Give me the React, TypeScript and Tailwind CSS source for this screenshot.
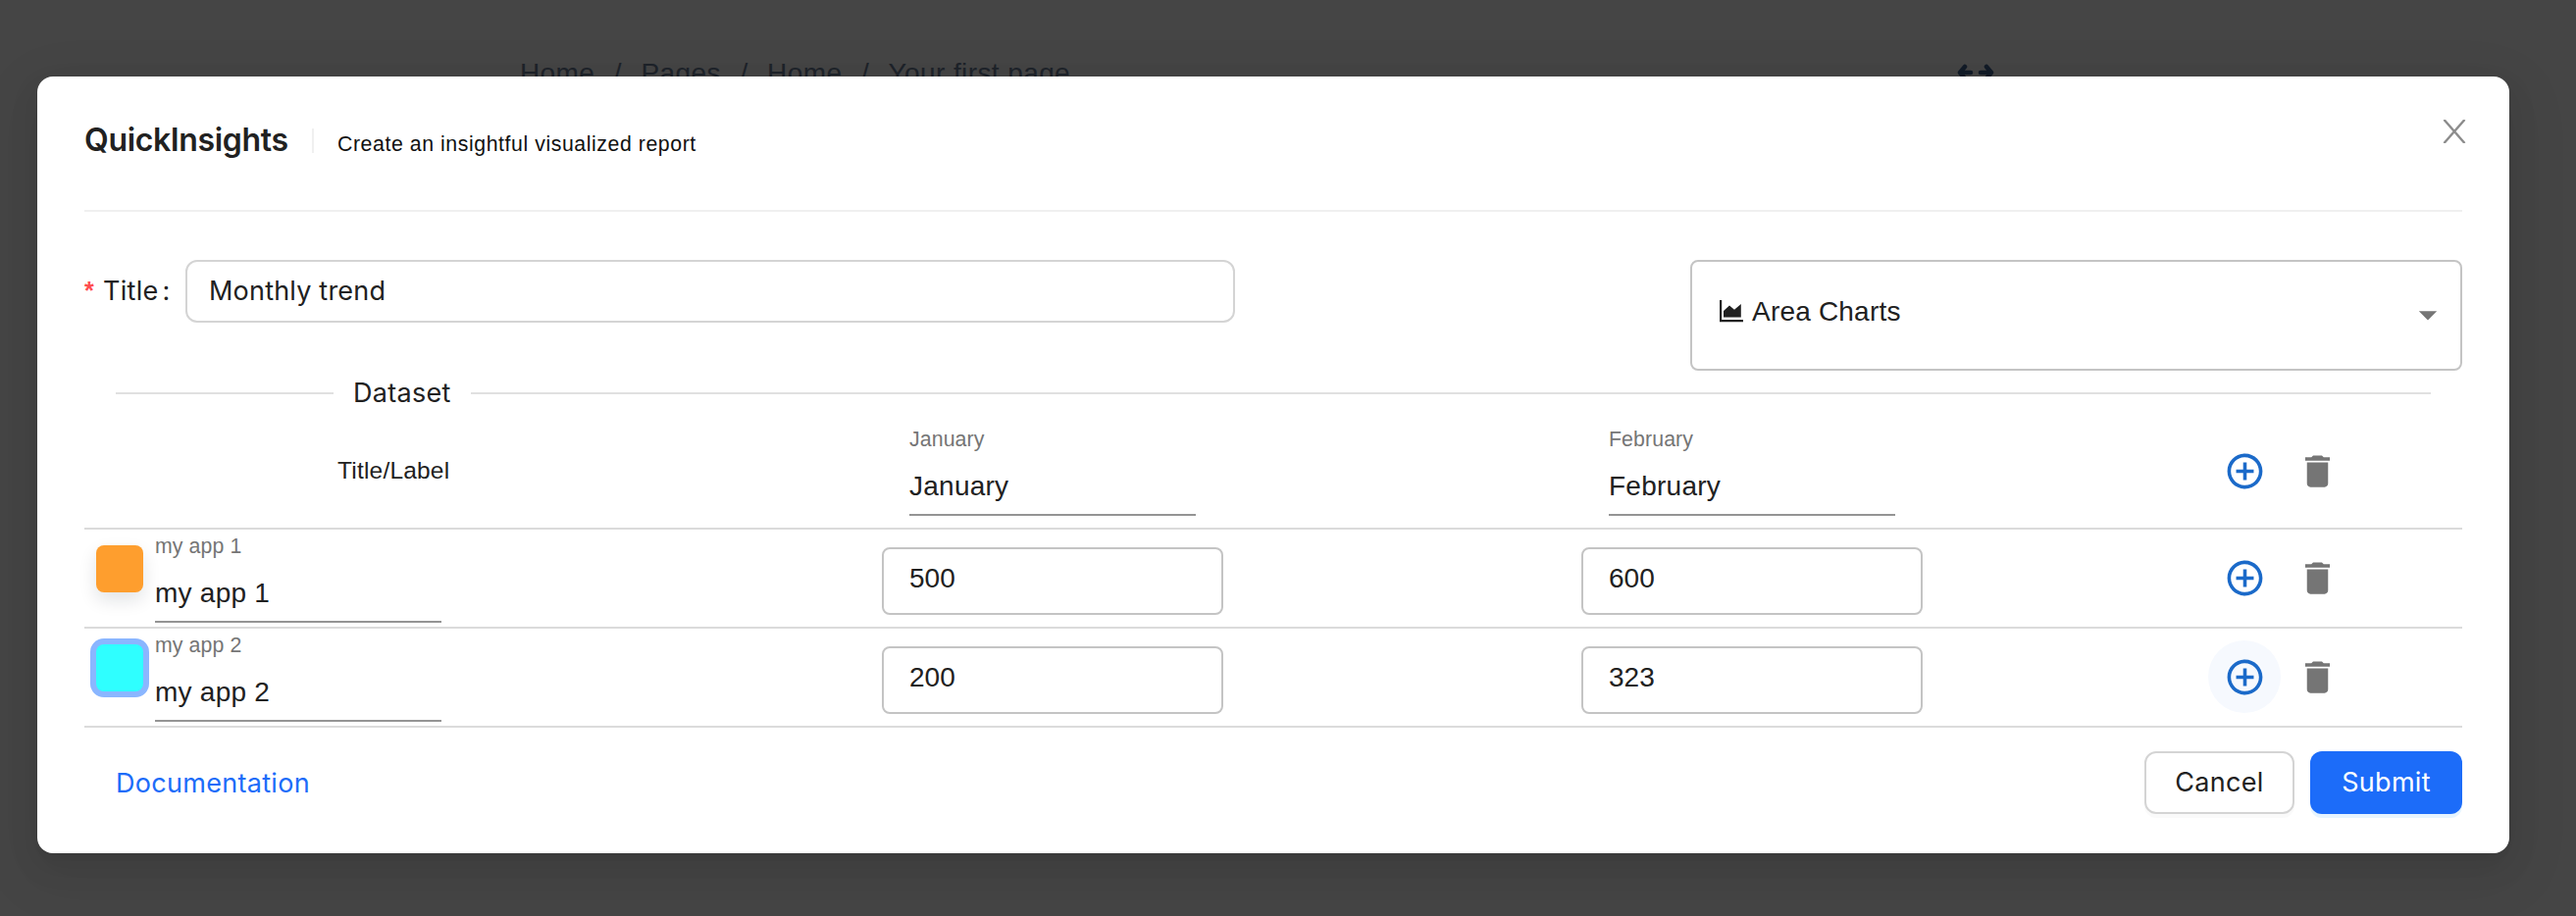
import { MdAddCircleOutline, MdDelete, MdArrowDropDown } from "react-icons/md";

const rows = [
  { label: "my app 1", values: ["500", "600"], swatch: "bg-[#fe9e2e] shadow-[0_8px_18px_rgba(15,23,42,0.12)]", hover: false },
  { label: "my app 2", values: ["200", "323"], swatch: "bg-[#2fffff] shadow-[0_0_0_6px_#8ab6ff]", hover: true },
];

function Actions({ hover = false }: { hover?: boolean }) {
  return (
    <div className="mb-[1px] flex items-center">
      <div className={hover ? "flex size-[74px] items-center justify-center rounded-full bg-[#f6f9fe]" : "flex size-[74px] items-center justify-center"}>
        <MdAddCircleOutline className="size-[43px] text-[#1b6ac9]" />
      </div>
      <div className="flex size-[74px] items-center justify-center">
        <MdDelete className="size-[43px] text-[#757575]" />
      </div>
    </div>
  );
}

function Field({ label }: { label: string }) {
  return (
    <div className="flex h-[92px] w-[292px] flex-col border-b-2 border-[#949494]">
      <span className="text-[21.3px] leading-[28px] tracking-[0.1px] text-[#757575]">{label}</span>
      <span className="mt-[14px] text-[28px] leading-[40px] tracking-[0.25px]">{label}</span>
    </div>
  );
}

export default function App() {
  return (
    <div className="h-[934px] w-[2626px] overflow-hidden bg-[#454545] font-['Liberation_Sans',sans-serif] text-[#212121]">
      <div className="flex h-[78px] pl-[530px] pt-[56px] text-[#1c2128]">
        <div className="flex h-[22px] w-[1464px] gap-[19.5px] overflow-hidden whitespace-pre text-[28px] leading-[37px] tracking-[0.4px]">
          <span>Home</span><span>/</span><span>Pages</span><span>/</span><span>Home</span><span>/</span><span>Your first page</span>
        </div>
        <svg className="h-[22px] w-[40px] overflow-hidden" viewBox="0 0 40 22" fill="none" stroke="#111a26" strokeWidth="4.5" strokeLinecap="round" strokeLinejoin="round">
          <path d="M15 18H4M9 12L4 18L9 24M25 18H36M31 12L36 18L31 24" />
        </svg>
      </div>
      <main className="ml-[38px] flex h-[792px] w-[2520px] flex-col rounded-2xl bg-white px-[48px] shadow-[0_12px_32px_rgba(0,0,0,0.08),0_6px_12px_-8px_rgba(0,0,0,0.12),0_18px_56px_16px_rgba(0,0,0,0.05)]">
        <header className="flex h-[138px] shrink-0 items-start border-b-2 border-[#f0f0f0]">
          <h1 className="mt-[45px] w-[232px] font-['Inter',sans-serif] text-[32px] leading-[40px] font-semibold tracking-[-0.35px]">QuickInsights</h1>
          <div className="mt-[53px] h-[25px] w-[2px] bg-[#f0f0f0]" />
          <p className="mt-[53px] ml-[24px] text-[21.3px] leading-[32px] tracking-[0.56px] text-[#111111]">Create an insightful visualized report</p>
          <svg className="mt-[44px] -mr-[4px] ml-auto size-[24px] text-[#8c8c8c]" viewBox="0 0 24 24" fill="none" stroke="currentColor" strokeWidth="2.4">
            <path d="M1.5 0L22.5 24M22.5 0L1.5 24" />
          </svg>
        </header>
        <section className="flex h-[163px] shrink-0 items-start pt-[49px]">
          <label className="flex h-[64px] w-[103px] items-center font-['Inter',sans-serif] text-[27px] tracking-[0.3px]">
            <span className="w-[19px] font-['Liberation_Sans',sans-serif] text-[25px] font-bold text-[#ff4d4f]">*</span>
            <span>Title</span>
            <span className="ml-[4px]">:</span>
          </label>
          <div className="flex h-[64px] w-[1070px] items-center rounded-xl border-2 border-[#d4d4d4] px-[22px] font-['Inter',sans-serif] text-[27px] tracking-[0.2px]">Monthly trend</div>
          <div className="ml-auto flex h-[113px] w-[787px] items-center rounded-lg border-2 border-[#c4c4c4] pr-[11px] pl-[28px] text-[28px]">
            <svg className="mr-[8px] mb-[9px] size-[25px]" viewBox="0 0 25 25" fill="currentColor"><path d="M0 1h2.2v20H24v2.2H0zM4 18.5V12L10 6.5L15 10.8L21.8 5V18.5z" /></svg>
            <span className="mb-[8px] tracking-[0.2px]">Area Charts</span>
            <MdArrowDropDown className="mb-[2px] ml-auto size-[44px] text-[#757575]" />
          </div>
        </section>
        <div className="mx-[32px] flex h-[44px] shrink-0 items-center gap-[20px]">
          <div className="h-[2px] w-[222px] bg-[#e0e0e0]" />
          <span className="w-[100px] font-['Inter',sans-serif] text-[27px] tracking-[0.3px]">Dataset</span>
          <div className="h-[2px] flex-1 bg-[#e0e0e0]" />
        </div>
        <div className="flex h-[117px] shrink-0 items-center border-b-2 border-[#dbdbdb]">
          <div className="w-[841px] pl-[258px] text-[24.5px] tracking-[0.2px]">Title/Label</div>
          <div className="mb-[1px] w-[713px]"><Field label="January" /></div>
          <div className="mb-[1px] w-[611px]"><Field label="February" /></div>
          <Actions />
        </div>
        {rows.map((row) => (
          <div key={row.label} className="flex h-[101px] shrink-0 items-center border-b-2 border-[#dbdbdb]">
            <div className={`ml-[12px] mb-[19px] size-[48px] rounded-lg ${row.swatch}`} />
            <div className="mb-[2px] ml-[12px] w-[741px]"><Field label={row.label} /></div>
            {row.values.map((value) => (
              <div key={value} className="mt-[6px] mr-[365px] h-[69px] w-[348px] rounded-lg border-2 border-[#c4c4c4] px-[26px] pt-[10px] text-[28px] leading-[40px]">{value}</div>
            ))}
            <div className="-ml-[74px]"><Actions hover={row.hover} /></div>
          </div>
        ))}
        <footer className="flex items-start gap-[16px] pt-[24px] font-['Inter',sans-serif] text-[27px] tracking-[0.3px]">
          <a className="mr-auto ml-[32px] leading-[66px] text-[#1c6cf9]">Documentation</a>
          <button className="h-[64px] w-[153px] rounded-xl border-2 border-[#d4d4d4] shadow-[0_4px_0_rgba(0,0,0,0.02)]">Cancel</button>
          <button className="h-[64px] w-[155px] rounded-xl bg-[#1c6cf9] text-white shadow-[0_4px_0_rgba(5,145,255,0.1)]">Submit</button>
        </footer>
      </main>
    </div>
  );
}
